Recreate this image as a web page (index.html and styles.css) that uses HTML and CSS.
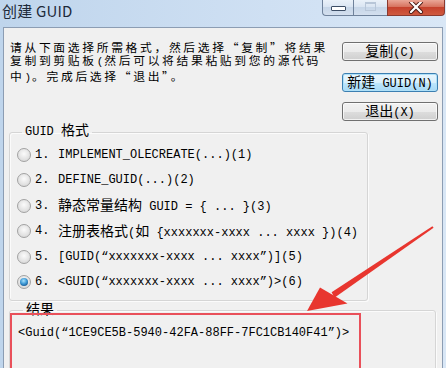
FILE: index.html
```html
<!DOCTYPE html>
<html lang="zh-CN">
<head>
<meta charset="utf-8">
<title>创建 GUID</title>
<link rel="stylesheet" href="styles.css">
</head>
<body>
<div class="window">
  <div class="titlebar">
    <span class="title">创建 GUID</span>
    <div class="controls">
      <span class="ctl min"><span class="min-glyph"></span></span>
      <span class="ctl max"><span class="max-glyph"></span></span>
      <span class="ctl close">
        <svg width="16" height="12" viewBox="0 0 16 12"><path d="M3 0 L13 10 M13 0 L3 10" stroke="#4a1a14" stroke-width="4" stroke-linecap="round"/><path d="M3 0 L13 10 M13 0 L3 10" stroke="#ffffff" stroke-width="2.2" stroke-linecap="round"/></svg>
      </span>
    </div>
  </div>
  <div class="client">
    <div class="top">
      <p class="intro">请从下面选择所需格式，然后选择“复制”将结果<br>复制到剪贴板<span class="p">(</span>然后可以将结果粘贴到您的源代码<br>中<span class="p">)</span>。完成后选择“退出”。</p>
      <div class="buttons">
        <button class="btn"><span class="cn">复制</span>(C)</button>
        <button class="btn default"><span class="cn">新建</span> GUID(N)</button>
        <button class="btn"><span class="cn">退出</span>(X)</button>
      </div>
    </div>
    <fieldset class="group formats">
      <legend>GUID <span class="cn">格式</span></legend>
      <div class="opt"><span class="radio"></span><span class="num">1.</span><span class="label">IMPLEMENT_OLECREATE(...)(1)</span></div>
      <div class="opt"><span class="radio"></span><span class="num">2.</span><span class="label">DEFINE_GUID(...)(2)</span></div>
      <div class="opt"><span class="radio"></span><span class="num">3.</span><span class="label"><span class="cn">静态常量结构</span> GUID = { ... }(3)</span></div>
      <div class="opt"><span class="radio"></span><span class="num">4.</span><span class="label"><span class="cn">注册表格式</span>(<span class="cn">如</span> {xxxxxxx-xxxx ... xxxx })(4)</span></div>
      <div class="opt"><span class="radio"></span><span class="num">5.</span><span class="label">[GUID(“xxxxxxx-xxxx ... xxxx”)](5)</span></div>
      <div class="opt"><span class="radio on"></span><span class="num">6.</span><span class="label">&lt;GUID(“xxxxxxx-xxxx ... xxxx”)&gt;(6)</span></div>
    </fieldset>
    <fieldset class="group result">
      <legend><span class="cn">结果</span></legend>
      <div class="guid">&lt;Guid(“1CE9CE5B-5940-42FA-88FF-7FC1CB140F41”)&gt;</div>
    </fieldset>
  </div>
  <div class="redbox"></div>
  <svg class="arrow" width="446" height="368" viewBox="0 0 446 368">
    <polygon points="433.6,227.8 432.4,226.2 331.6,292.2 334.4,297.8" fill="#e8362f"/>
    <polygon points="307,311 320,287.5 347.5,303.5" fill="#e8362f"/>
  </svg>
</div>
</body>
</html>
```
FILE: styles.css
```css
html, body {
  margin: 0;
  padding: 0;
}

body {
  width: 446px;
  height: 368px;
  overflow: hidden;
  background: #f0f0f0;
}

.window {
  position: relative;
  width: 446px;
  height: 368px;
  overflow: hidden;
  display: flex;
  flex-direction: column;
  background: linear-gradient(to right, #bfd5ec, #cfe0f3 60%, #d9e7f6);
  font-family: "Liberation Mono", "Noto Sans CJK SC", monospace;
  font-size: 12px;
  line-height: 14px;
  color: #000;
}

.titlebar {
  height: 27px;
  flex: none;
  display: flex;
  justify-content: space-between;
  align-items: flex-start;
}

.title {
  font-family: "Noto Sans CJK SC", "Noto Sans", sans-serif;
  font-size: 15px;
  line-height: 20px;
  color: #1e2a3a;
  margin: 1px 0 0 2px;
  letter-spacing: 0.2px;
}

.controls {
  display: flex;
  margin-right: 1px;
  height: 16px;
}

.ctl {
  display: flex;
  align-items: center;
  justify-content: center;
  box-sizing: border-box;
  height: 16px;
  border: 1px solid #6f829b;
  border-top: none;
}

.min {
  width: 31px;
  border-right: none;
  border-radius: 0 0 0 4px;
  background: linear-gradient(#eaf1f9, #dae5f2 45%, #c7d6e8 50%, #d3dfee);
}

.max {
  width: 34px;
  border-right: none;
  background: linear-gradient(#eaf1f9, #dae5f2 45%, #c7d6e8 50%, #d3dfee);
}

.close {
  width: 58px;
  border-color: #8b3a2f;
  border-radius: 0 0 4px 0;
  background: linear-gradient(#eaa797, #d7735f 45%, #c6422d 50%, #cf5a40);
}

.min-glyph {
  width: 13px;
  height: 3px;
  margin-top: 2px;
  background: #fff;
  border: 1px solid #3d4e66;
  border-radius: 1px;
}

.max-glyph {
  width: 9px;
  height: 6px;
  margin-bottom: 3px;
  border: 1px solid #b8c6d8;
  border-top-width: 2px;
  background: transparent;
}

.client {
  flex: 1;
  margin: 0 3px;
  border: 1px solid #8c9db3;
  border-bottom: none;
  background: #f0f0f0;
  display: flex;
  flex-direction: column;
}

.top {
  display: flex;
  justify-content: space-between;
  align-items: flex-start;
  padding: 12px 4px 0 6px;
}

.intro {
  margin: 0;
  font-family: "Noto Sans CJK SC", sans-serif;
  font-size: 11.8px;
  line-height: 13px;
  letter-spacing: 2.65px;
  white-space: nowrap;
}

.intro .p {
  font-family: "Liberation Mono", monospace;
  font-size: 11px;
  letter-spacing: 1px;
}

.cn {
  font-family: "Noto Sans CJK SC", sans-serif;
  font-size: 14px;
  line-height: 14px;
}

.buttons {
  display: flex;
  flex-direction: column;
  margin-top: 2px;
}

.btn {
  display: block;
  width: 96px;
  height: 19px;
  padding: 0;
  margin: 0;
  box-sizing: border-box;
  border: 1px solid #707070;
  border-radius: 3px;
  background: linear-gradient(#f2f2f2, #ebebeb 50%, #dddddd 51%, #cfcfcf);
  box-shadow: inset 0 0 0 1px rgba(255, 255, 255, 0.7);
  font-family: "Liberation Mono", "Noto Sans CJK SC", monospace;
  font-size: 12px;
  line-height: 16px;
  color: #000;
  text-align: center;
  white-space: nowrap;
}

.btn.default {
  margin-top: 12px;
  border-color: #3c7fb1;
  background: linear-gradient(#eaf6fd, #d9f0fc 50%, #bee6fd 51%, #a7d9f5);
  box-shadow: inset 0 0 0 1px #aee0f8;
}

.btn.default + .btn {
  margin-top: 10px;
}

.group {
  margin: 0 0 0 5px;
  border: 1px solid #d5d5d5;
  border-radius: 3px;
  box-shadow: inset 1px 1px 0 #fbfbfb, 1px 1px 0 #fbfbfb;
  min-width: 0;
}

.group legend {
  box-sizing: content-box;
  height: 14px;
  padding: 0 3px 6px;
  margin-left: 5px;
  line-height: 14px;
  white-space: nowrap;
}

.formats {
  margin-top: 1px;
  width: 359px;
  box-sizing: border-box;
  padding: 0 6px 5px 7px;
}

.opt {
  height: 25.5px;
  display: flex;
  align-items: center;
  white-space: nowrap;
}

.label {
  line-height: 14px;
}

.radio {
  position: relative;
  width: 14px;
  height: 14px;
  box-sizing: border-box;
  border-radius: 50%;
  border: 1px solid #a2a2a2;
  background: radial-gradient(circle at 50% 40%, #fbfbfb, #e2e2e2 60%, #cfcfcf);
  margin-right: 4px;
  flex: none;
}

.radio.on::after {
  content: "";
  position: absolute;
  left: 2px;
  top: 2px;
  width: 8px;
  height: 8px;
  border-radius: 50%;
  background: radial-gradient(circle at 45% 35%, #a9e2fb, #3f9ad6 45%, #11508a 85%);
}

.num {
  width: 23px;
  flex: none;
}

.result {
  margin-top: -1px;
  width: 427px;
  box-sizing: border-box;
  padding: 6px 8px 40px 8px;
}

.result legend {
  padding: 1px 3px 5px;
}

.guid {
  line-height: 14px;
  white-space: nowrap;
}

.redbox {
  position: absolute;
  left: 10px;
  top: 313px;
  width: 351px;
  height: 80px;
  box-sizing: border-box;
  border: 2px solid #e9505a;
}

.arrow {
  position: absolute;
  left: 0;
  top: 0;
}
```
